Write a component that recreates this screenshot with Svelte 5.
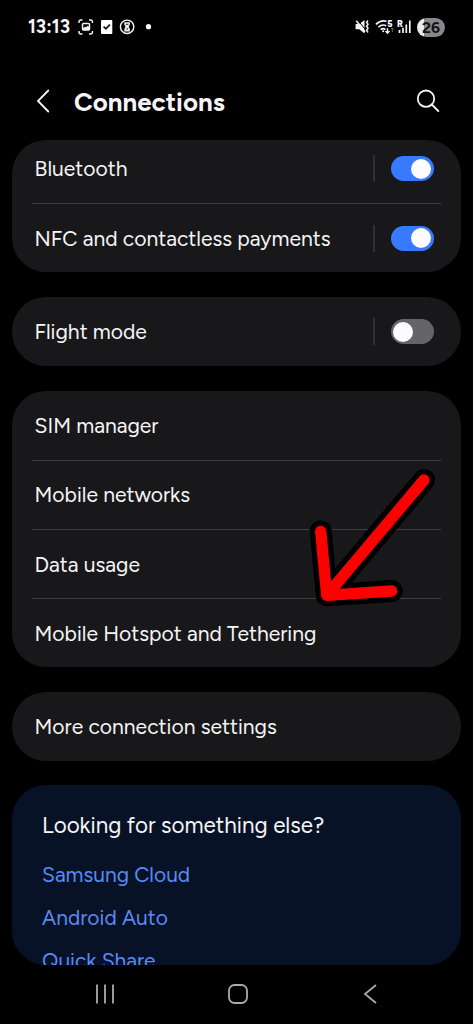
<script>
    //the cards with settings, "on" is only there for rows with a switch
    let groups = $state([
        [
            { name: "Bluetooth", on: true },
            { name: "NFC and contactless payments", on: true }
        ],
        [{ name: "Flight mode", on: false }],
        [
            { name: "SIM manager" },
            { name: "Mobile networks" },
            { name: "Data usage" },
            { name: "Mobile Hotspot and Tethering" }
        ],
        [{ name: "More connection settings" }]
    ])

    const links = ["Samsung Cloud", "Android Auto", "Quick Share"]
</script>

<div class="phone">
    <!--Status bar-->
    <div class="status">
        <span class="time">13:13</span>
        <svg class="left-icons" width="78" height="18" viewBox="78 18 78 18" fill="none" stroke="#f4f4f4">
            <path d="M79 23v-1q0-2 2-2h1.500M89 20h1.500q2 0 2 2v1M92.500 31v1q0 2-2 2h-1.500M82.500 34h-1.500q-2 0-2-2v-1" stroke-width="1.400" />
            <rect x="82.500" y="23.500" width="7" height="6.500" rx="1" stroke-width="1.500" />
            <path d="M83 28.200l2-1.500 1 .6 1.800-1.600 1.700 1.500v2.800h-6.500z" fill="#f4f4f4" stroke="none" />
            <rect x="101" y="20" width="11.300" height="14" rx="1" fill="#fff" stroke="none" />
            <path d="M103.600 26.600l2.300 2.300 4-4.300" stroke="#111" stroke-width="1.700" />
            <circle cx="127.100" cy="26.800" r="6.700" stroke-width="1.400" />
            <path d="M124.300 22.300h5.600v2.200l-1.200 2.300 1.200 2.300v2.300h-5.600v-2.300l1.200-2.300-1.200-2.300z" fill="#eee" stroke="none" />
            <path d="M125.800 24.300h2.600M127.100 28v1.800" stroke="#222" stroke-width="1" />
            <circle cx="148.500" cy="26.700" r="2.600" fill="#fff" stroke="none" />
        </svg>
        <svg class="right-icons" width="58" height="18" viewBox="355 18 58 18" fill="none" stroke="#f4f4f4">
            <path d="M355.600 24h3.700l5.200-4v13.500l-5.200-4.300h-3.700z" fill="#f4f4f4" stroke="none" />
            <path d="M358 20.300l7.500 9.500" stroke="#000" stroke-width="1" />
            <path d="M356.300 20.800l8.700 11.200" stroke-width="1.500" />
            <path d="M368 20.500l-1.400 1.800 1.400 2-1.400 2 1.400 2-1.400 2 1.400 2.200" stroke-width="1.500" />
            <path d="M376 24.300q5-4.800 10.500-3M378.400 27.100q4-3.400 7.800-1.300M380.600 29.600q2.500-1.900 4.800 0" stroke-width="1.700" />
            <path d="M387.500 28.300v4.700M385.500 31l2 2.200 2-2.200" stroke-width="1.400" />
            <path d="M392.300 32v-4M390.800 29.300l1.500-1.500 1.500 1.500" stroke="#666" stroke-width="1" />
            <circle cx="383.200" cy="31.300" r="1" fill="#fff" stroke="none" />
            <text x="387.300" y="26.500">5</text>
            <text x="397" y="26.500">R</text>
            <path d="M399.500 30v3M403 27.800v5.200M406.300 24.500v8.500M409.800 20.500v12.500" stroke-width="1.700" />
        </svg>
        <span class="battery">26</span>
    </div>

    <!--Title-->
    <header>
        <button class="back" aria-label="Back">
            <svg width="14" height="24" viewBox="0 0 14 24"><path d="M12.300 1.500L2 12l10.300 10.500" /></svg>
        </button>
        <h1>Connections</h1>
        <button class="search" aria-label="Search">
            <svg width="24" height="24" viewBox="0 0 24 24"><circle cx="10" cy="9.700" r="8.200" /><path d="M15.800 15.500l6.500 6.500" /></svg>
        </button>
    </header>

    <main>
        {#each groups as group}
            <section class="card">
                {#each group as item}
                    <div class="row">
                        <p>{item.name}</p>
                        {#if item.on !== undefined}
                            <button
                                class="switch"
                                class:on={item.on}
                                aria-label={item.name}
                                onclick={() => (item.on = !item.on)}
                            ><span></span></button>
                        {/if}
                    </div>
                {/each}
            </section>
        {/each}

        <section class="more">
            <h2>Looking for something else?</h2>
            {#each links as link}
                <a href="#top">{link}</a>
            {/each}
        </section>
    </main>

    <!--Navigation buttons-->
    <nav>
        <svg width="20" height="20" viewBox="0 0 20 20"><path d="M2 .5v19M10 .5v19M18 .5v19" /></svg>
        <svg width="20" height="20" viewBox="0 0 20 20"><rect x="1" y="1" width="18" height="18" rx="5.500" /></svg>
        <svg width="20" height="20" viewBox="0 0 20 20"><path d="M16 1L5 10l11 9" /></svg>
    </nav>

    <!--Arrow pointing at the hotspot row-->
    <svg class="arrow" width="140" height="145" viewBox="305 465 140 145">
        <path class="outline" d="M424 480L326.700 595.300M320.700 531.300l6 64 65-4.300" />
        <path d="M424 480L326.700 595.300M320.700 531.300l6 64 65-4.300" />
    </svg>
</div>

<style>
:global(body) {
    background: #000;
}

.phone {
    position: relative;
    width: 473px;
    height: 1024px;
    overflow: hidden;
    display: flex;
    flex-direction: column;
    background: #000;
    color: #f5f5f7;
    font-family: Figtree, Inter, "Liberation Sans", sans-serif;
}

h1, h2, p {
    margin: 0;
}

button {
    padding: 0;
    border: none;
    background: none;
}

svg {
    display: block;
}

/*Status bar*/
.status {
    display: flex;
    align-items: center;
    height: 54px;
    padding: 0 28px;
    box-sizing: border-box;
}

.time {
    width: 50px;
    font-size: 18.6px;
    font-weight: 700;
    line-height: 20px;
    white-space: nowrap;
}

.right-icons {
    margin-left: auto;
    margin-right: 4px;
}

.right-icons text {
    font-size: 9px;
    font-weight: 800;
    fill: #fff;
    stroke: none;
}

.battery {
    width: 28px;
    height: 19px;
    border-radius: 10px;
    background: linear-gradient(90deg, #ececf0 26%, #88888b 26%);
    color: #111;
    font-size: 15.5px;
    font-weight: 700;
    line-height: 19px;
    text-align: center;
}

/*Title*/
header {
    display: flex;
    align-items: center;
    height: 86.4px;
    padding: 8px 33px 0 36px;
    box-sizing: border-box;
}

header svg {
    fill: none;
    stroke: #f5f5f7;
    stroke-width: 1.8;
    stroke-linecap: round;
}

h1 {
    margin-left: 24px;
    font-size: 25.9px;
    font-weight: 700;
}

.search {
    margin-left: auto;
}

/*Cards*/
main {
    flex: none;
    display: flex;
    flex-direction: column;
    gap: 24.6px;
    height: 824.6px;
    margin: 0 12.5px 0 12px;
    overflow: hidden;
    border-radius: 0 0 34px 34px;
}

.card {
    flex: none;
    border-radius: 34px;
    background: #18181a;
}

.row {
    display: flex;
    align-items: center;
    justify-content: space-between;
    height: 69.1px;
    margin: 0 20px;
    padding: 0 7px 0 2.5px;
    box-sizing: border-box;
}

/*first row is partly scrolled under the title*/
.card:first-child .row:first-child {
    height: 63px;
    padding-bottom: 6.5px;
}

.row + .row {
    border-top: 1px solid #3e3e40;
}

.row p {
    font-size: 21.1px;
    white-space: nowrap;
}

.switch {
    position: relative;
    width: 43px;
    height: 25px;
    border-radius: 13px;
    background: #656569;
}

.switch::before {
    content: "";
    position: absolute;
    left: -17.5px;
    top: -1px;
    width: 1.5px;
    height: 27px;
    background: #303033;
}

.switch span {
    display: block;
    width: 20px;
    height: 20px;
    margin-left: 2.5px;
    border-radius: 50%;
    background: #fcfcff;
}

.switch.on {
    background: #387aff;
}

.switch.on span {
    margin-left: 20.5px;
}

.more {
    flex: none;
    height: 260px;
    padding: 19px 30px;
    box-sizing: border-box;
    border-radius: 34px;
    background: #071226;
}

h2 {
    height: 49px;
    font-size: 22.4px;
    font-weight: 400;
    line-height: 43px;
}

.more a {
    display: block;
    height: 43px;
    color: #598af4;
    font-size: 21px;
    line-height: 43px;
    text-decoration: none;
}

/*Navigation*/
nav {
    display: flex;
    justify-content: space-between;
    align-items: center;
    height: 58px;
    padding: 0 93px 0 95px;
}

nav svg {
    fill: none;
    stroke: #aaaaac;
    stroke-width: 1.8;
}

/*Arrow*/
.arrow {
    position: absolute;
    left: 305px;
    top: 465px;
    fill: none;
    stroke: #ff0000;
    stroke-width: 11.3;
    stroke-linecap: round;
    stroke-linejoin: round;
    pointer-events: none;
}

.outline {
    stroke: #000;
    stroke-width: 22;
}
</style>
